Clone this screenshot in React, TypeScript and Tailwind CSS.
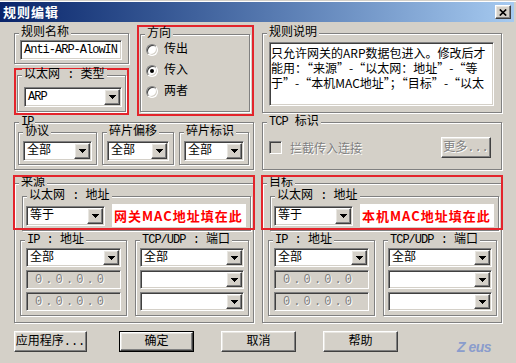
import React from "react";

const raised =
  "border border-t-white border-l-white border-r-[#404040] border-b-[#404040] shadow-[inset_-1px_-1px_0_#808080,inset_1px_1px_0_#e8e6e1]";
const sunken =
  "border border-t-[#808080] border-l-[#808080] border-r-white border-b-white shadow-[inset_1px_1px_0_#404040,inset_-1px_-1px_0_#d4d0c8]";
const redBox = "border-2 border-[#e3242b]";
const disabled = "text-[#808080] [text-shadow:1px_1px_0_#ffffff]";

type Kids = { children?: React.ReactNode };

const M = ({ children }: Kids) => (
  <span className="font-['Liberation_Mono',monospace] tracking-[-1px]">{children}</span>
);

// full-width curly quotes, like the original bitmap font
const Line = ({ t }: { t: string }) => (
  <div>
    {t.split(/([“”])/).map((s, i) =>
      s === "“" || s === "”" ? (
        <span key={i} className="[font-feature-settings:'fwid']">
          {s}
        </span>
      ) : (
        <React.Fragment key={i}>{s}</React.Fragment>
      )
    )}
  </div>
);

function Group({ label, className = "", children }: Kids & { label: React.ReactNode; className?: string }) {
  return (
    <div className={`relative border border-[#808080] shadow-[inset_1px_1px_0_#fff,1px_1px_0_#fff] ${className}`}>
      <span className="absolute left-[4px] top-[-7px] whitespace-nowrap bg-[#d4d0c8] px-[2px] leading-[12px]">
        {label}
      </span>
      {children}
    </div>
  );
}

const Arrow = () => (
  <svg width="7" height="4" viewBox="0 0 7 4" shapeRendering="crispEdges">
    <path d="M0 0h7v1h-1v1h-1v1h-1v1h-1v-1h-1v-1h-1v-1h-1z" fill="#000" />
  </svg>
);

function Select({ value = "", className = "" }: { value?: React.ReactNode; className?: string }) {
  return (
    <div className={`flex bg-white ${sunken} ${className}`}>
      <div className="flex flex-1 items-center overflow-hidden whitespace-nowrap pl-[3px]">{value}</div>
      <div className={`my-[1px] mr-[1px] flex w-[16px] items-center justify-center bg-[#d4d0c8] ${raised}`}>
        <Arrow />
      </div>
    </div>
  );
}

function IpField() {
  return (
    <div className={`flex h-[19px] items-center justify-between bg-[#d4d0c8] pl-[8px] pr-[16px] ${disabled} ${sunken}`}>
      {["0", ".", "0", ".", "0", ".", "0"].map((c, i) => (
        <span key={i} className="font-['Liberation_Mono',monospace]">
          {c}
        </span>
      ))}
    </div>
  );
}

function Radio({ checked = false }: { checked?: boolean }) {
  return (
    <span className="flex h-[12px] w-[12px] items-center justify-center rounded-full border border-t-[#808080] border-l-[#808080] border-r-white border-b-white bg-white shadow-[inset_1px_1px_0_#404040,inset_-1px_-1px_0_#d4d0c8]">
      {checked && <span className="h-[4px] w-[4px] rounded-full bg-black" />}
    </span>
  );
}

function Btn({ children, className = "", def = false }: Kids & { className?: string; def?: boolean }) {
  return (
    <div className={`h-[21px] ${def ? "border border-black" : ""} ${className}`}>
      <div className={`flex h-full items-center justify-center bg-[#d4d0c8] ${raised}`}>{children}</div>
    </div>
  );
}

function Endpoint({ title, note }: { title: string; note: string }) {
  return (
    <Group label={title} className="h-[140px] w-[240px]">
      <div className={`pointer-events-none absolute left-[-2px] right-[-2px] top-[-9px] z-10 h-[55px] ${redBox}`} />
      <Group
        label={
          <>
            以太网 <M>:</M> 地址
          </>
        }
        className="ml-[7px] mt-[12px] h-[35px] w-[229px] pl-[3px] pt-[7px]"
      >
        <div className="flex items-center gap-[7px]">
          <Select value="等于" className="h-[20px] w-[79px]" />
          <div className="flex h-[23px] w-[134px] items-center bg-white pl-[2px] font-['Noto_Sans_CJK_SC',sans-serif] text-[13px] font-bold tracking-[1px] text-[#ff0000]">
            {note}
          </div>
        </div>
      </Group>
      <div className="ml-[5px] mt-[9px] flex gap-[8px]">
        <Group
          label={
            <>
              <M>IP</M> <M>:</M> 地址
            </>
          }
          className="h-[76px] w-[107px] px-[5px] pt-[7px]"
        >
          <div className="flex flex-col gap-[3px]">
            <Select value="全部" className="h-[19px]" />
            <IpField />
            <IpField />
          </div>
        </Group>
        <Group
          label={
            <>
              <M>TCP/UDP</M> <M>:</M> 端口
            </>
          }
          className="h-[76px] w-[114px] px-[4px] pt-[7px]"
        >
          <div className="flex flex-col gap-[3px]">
            <Select value="全部" className="h-[19px]" />
            <Select className="h-[19px]" />
            <Select className="h-[19px]" />
          </div>
        </Group>
      </div>
    </Group>
  );
}

export default function App() {
  return (
    <div className="h-[363px] w-[516px] overflow-hidden border-t border-t-[#d4d0c8] bg-[#d4d0c8] font-['Liberation_Mono','Noto_Sans_CJK_SC',monospace] text-[12px] leading-[14px] text-black">
      <div className="border-t border-t-white" />
      <div className="mr-[2px] flex h-[20px] items-center justify-between bg-linear-to-r from-[#0a246a] to-[#a6caf0] pl-[3px] pr-[3px]">
        <span className="font-['Noto_Sans_CJK_SC',sans-serif] text-[13px] font-bold tracking-[1px] text-white">规则编辑</span>
        <div className={`flex h-[14px] w-[16px] items-center justify-center bg-[#d4d0c8] ${raised}`}>
          <svg width="8" height="7" viewBox="0 0 8 7">
            <path d="M0.8 0.5L7.2 6.5M7.2 0.5L0.8 6.5" stroke="#000" strokeWidth="1.7" />
          </svg>
        </div>
      </div>

      <div className="px-[14px] pt-[3px]">
        {/* row 1 */}
        <div className="flex gap-[8px]">
          <div className="flex w-[240px] gap-[8px]">
            <div className="flex w-[115px] flex-col">
              <Group label="规则名称" className="mt-[8px] h-[31px] pl-[5px] pt-[6px]">
                <div className={`flex h-[20px] w-[102px] items-center bg-white pl-[3px] ${sunken}`}>
                  <M>Anti-ARP-AlowIN</M>
                </div>
              </Group>
              <div className={`mt-[4px] h-[47px] px-[1px] pt-[5px] ${redBox}`}>
                <Group
                  label={
                    <>
                      以太网 <M>:</M> 类型
                    </>
                  }
                  className="h-[37px] pl-[6px] pt-[11px]"
                >
                  <Select value={<M>ARP</M>} className="h-[20px] w-[98px]" />
                </Group>
              </div>
            </div>
            <div className={`h-[91px] w-[117px] pl-[1px] pr-[2px] pt-[7px] ${redBox}`}>
              <Group label="方向" className="h-[78px] pl-[5px] pt-[8px]">
                <div className="flex flex-col gap-[7px]">
                  {[
                    ["传出", false],
                    ["传入", true],
                    ["两者", false],
                  ].map(([t, c]) => (
                    <div key={t as string} className="flex h-[14px] items-center gap-[6px]">
                      <Radio checked={c as boolean} />
                      <span>{t}</span>
                    </div>
                  ))}
                </div>
              </Group>
            </div>
          </div>
          <Group label="规则说明" className="mt-[8px] h-[80px] w-[240px] pl-[6px] pt-[8px]">
            <div
              className={`h-[64px] w-[225px] overflow-hidden whitespace-nowrap bg-white pl-[1px] pt-[2px] font-['Noto_Sans_CJK_SC',sans-serif] leading-[15px] ${sunken}`}
            >
              <Line t="只允许网关的ARP数据包进入。修改后才" />
              <Line t="能用：“来源”-“以太网：地址”-“等" />
              <Line t="于”-“本机MAC地址”；“目标”-“以太" />
            </div>
          </Group>
        </div>

        {/* row 2 */}
        <div className="mt-[6px] flex gap-[8px]">
          <Group label={<M>IP</M>} className="flex h-[48px] w-[240px] gap-[5px] pl-[3px] pt-[9px]">
            {[
              ["协议", "w-[79px]"],
              ["碎片偏移", "w-[72px]"],
              ["碎片标识", "w-[70px]"],
            ].map(([l, w]) => (
              <Group key={l} label={l} className={`h-[33px] px-[4px] pt-[8px] ${w}`}>
                <Select value="全部" className="h-[20px]" />
              </Group>
            ))}
          </Group>
          <Group
            label={
              <>
                <M>TCP</M> 标识
              </>
            }
            className="flex h-[48px] w-[240px] items-start justify-between pl-[6px] pr-[10px] pt-[14px]"
          >
            <div className="flex h-[21px] items-center gap-[8px]">
              <span className={`h-[13px] w-[13px] bg-[#d4d0c8] ${sunken}`} />
              <span className={`font-['Noto_Sans_CJK_SC',sans-serif] ${disabled}`}>拦截传入连接</span>
            </div>
            <Btn className="w-[50px]">
              <span className={disabled}>更多...</span>
            </Btn>
          </Group>
        </div>

        {/* row 3 */}
        <div className="mt-[13px] flex gap-[8px]">
          <Endpoint title="来源" note="网关MAC地址填在此" />
          <Endpoint title="目标" note="本机MAC地址填在此" />
        </div>

        {/* buttons */}
        <div className="mt-[8px] flex items-start">
          <Btn className="w-[73px]">应用程序...</Btn>
          <Btn def className="ml-[32px] w-[75px]">
            确定
          </Btn>
          <Btn className="ml-[27px] w-[75px]">取消</Btn>
          <Btn className="ml-[27px] w-[75px]">帮助</Btn>
          <span className="ml-[59px] mt-[9px] font-['Liberation_Sans',sans-serif] text-[14px] font-bold italic tracking-[-0.5px] text-[#8a9ccc]">
            Z eus
          </span>
        </div>
      </div>
    </div>
  );
}
